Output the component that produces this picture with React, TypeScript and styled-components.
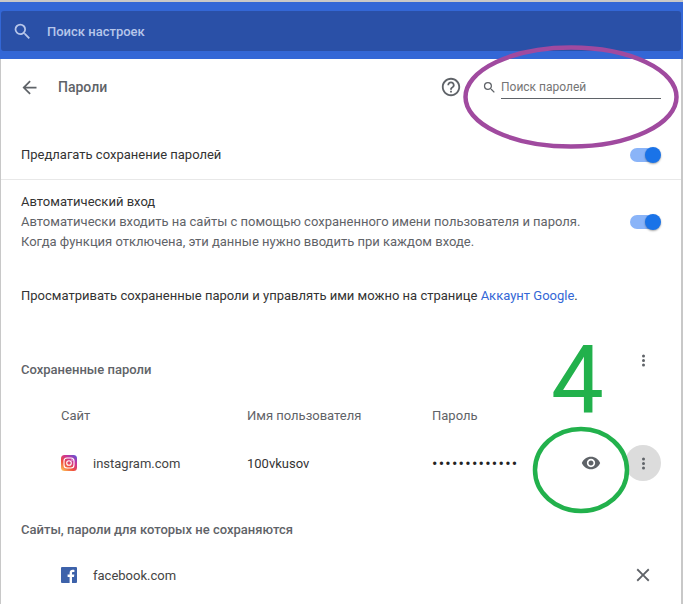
import React from "react";
import styled, { createGlobalStyle } from "styled-components";

const GlobalStyle = createGlobalStyle`
  html, body { margin: 0; padding: 0; background: #fff; }
  body { font-family: Roboto, "Noto Sans", sans-serif; }
`;

const App: React.FC = () => {
  return (
    <>
      <GlobalStyle />
      <Page>
        <TopBar>
          <SearchBox>
            <SearchGlyph size={21} color="#b7c6ea" viewBox="0 0 24 24">
              <path d="M15.5 14h-.79l-.28-.27A6.47 6.47 0 0 0 16 9.5 6.5 6.5 0 1 0 9.5 16c1.61 0 3.09-.59 4.23-1.57l.27.28v.79l5 4.99L20.49 19l-4.99-5zm-6 0C7.01 14 5 11.99 5 9.5S7.01 5 9.5 5 14 7.01 14 9.5 11.99 14 9.5 14z" />
            </SearchGlyph>
            <SearchHint>Поиск настроек</SearchHint>
          </SearchBox>
        </TopBar>

        <Card>
          <TitleRow>
            <BackButton viewBox="0 0 24 24" width="21" height="21">
              <path d="M20 11H7.83l5.59-5.59L12 4l-8 8 8 8 1.41-1.41L7.83 13H20v-2z" />
            </BackButton>
            <Title>Пароли</Title>
            <Spacer />
            <HelpIcon viewBox="0 0 24 24" width="22" height="22">
              <path d="M11 18h2v-2h-2v2zm1-16C6.48 2 2 6.48 2 12s4.48 10 10 10 10-4.48 10-10S17.52 2 12 2zm0 18c-4.41 0-8-3.59-8-8s3.59-8 8-8 8 3.59 8 8-3.59 8-8 8zm0-14c-2.21 0-4 1.79-4 4h2c0-1.1.9-2 2-2s2 .9 2 2c0 2-3 1.75-3 5h2c0-2.25 3-2.5 3-5 0-2.21-1.79-4-4-4z" />
            </HelpIcon>
            <PasswordSearch>
              <SearchGlyph size={15} color="#5f6368" viewBox="0 0 24 24">
                <path d="M15.5 14h-.79l-.28-.27A6.47 6.47 0 0 0 16 9.5 6.5 6.5 0 1 0 9.5 16c1.61 0 3.09-.59 4.23-1.57l.27.28v.79l5 4.99L20.49 19l-4.99-5zm-6 0C7.01 14 5 11.99 5 9.5S7.01 5 9.5 5 14 7.01 14 9.5 11.99 14 9.5 14z" />
              </SearchGlyph>
              <PasswordInput>Поиск паролей</PasswordInput>
            </PasswordSearch>
          </TitleRow>

          <OfferRow>
            <BodyText>Предлагать сохранение паролей</BodyText>
            <Toggle />
          </OfferRow>

          <AutoRow>
            <div>
              <BodyText>Автоматический вход</BodyText>
              <Secondary>Автоматически входить на сайты с помощью сохраненного имени пользователя и пароля.</Secondary>
              <Secondary>Когда функция отключена, эти данные нужно вводить при каждом входе.</Secondary>
            </div>
            <Toggle />
          </AutoRow>

          <AccountLine>
            Просматривать сохраненные пароли и управлять ими можно на странице <AccountLink>Аккаунт Google</AccountLink>.
          </AccountLine>

          <SavedHeader>
            <SectionTitle>Сохраненные пароли</SectionTitle>
            <HeaderMore />
          </SavedHeader>

          <TableHead>
            <SiteCol>Сайт</SiteCol>
            <UserCol>Имя пользователя</UserCol>
            <PassCol>Пароль</PassCol>
          </TableHead>

          <PasswordRow>
            <SiteCell>
              <svg width="16" height="16" viewBox="0 0 16 16">
                <defs>
                  <linearGradient id="ig" x1="0.1" y1="1" x2="0.9" y2="0">
                    <stop offset="0" stopColor="#fdc35c" />
                    <stop offset="0.35" stopColor="#f0503c" />
                    <stop offset="0.7" stopColor="#c9329a" />
                    <stop offset="1" stopColor="#5b55d6" />
                  </linearGradient>
                </defs>
                <rect width="16" height="16" rx="3.5" fill="url(#ig)" />
                <rect x="3" y="3" width="10" height="10" rx="3" fill="none" stroke="#fff" strokeWidth="1.1" />
                <circle cx="8" cy="8" r="2.3" fill="none" stroke="#fff" strokeWidth="1.1" />
                <circle cx="11" cy="5" r="0.7" fill="#fff" />
              </svg>
              <SiteName>instagram.com</SiteName>
            </SiteCell>
            <UserCell>100vkusov</UserCell>
            <Dots>•••••••••••••</Dots>
            <EyeIcon viewBox="0 0 24 24" width="20" height="20">
              <path d="M12 4.5C7 4.5 2.73 7.61 1 12c1.73 4.39 6 7.5 11 7.5s9.27-3.11 11-7.5c-1.73-4.39-6-7.5-11-7.5zM12 17c-2.76 0-5-2.24-5-5s2.24-5 5-5 5 2.24 5 5-2.24 5-5 5zm0-8c-1.66 0-3 1.34-3 3s1.34 3 3 3 3-1.34 3-3-1.34-3-3-3z" />
            </EyeIcon>
            <RoundButton>
              <MoreIcon />
            </RoundButton>
          </PasswordRow>

          <NeverTitle>Сайты, пароли для которых не сохраняются</NeverTitle>

          <NeverRow>
            <svg width="16" height="16" viewBox="0 0 16 16">
              <rect width="16" height="16" rx="1" fill="#3d62aa" />
              <path d="M11 16v-6h2l.3-2.4H11V6.1c0-.7.2-1.1 1.2-1.1h1.2V2.9c-.2 0-.9-.1-1.8-.1-1.8 0-3 1.1-3 3.1v1.7H6.6V10h2v6z" fill="#fff" />
            </svg>
            <SiteName>facebook.com</SiteName>
            <Spacer />
            <CloseIcon viewBox="0 0 24 24" width="22" height="22">
              <path d="M19 6.41 17.59 5 12 10.59 6.41 5 5 6.41 10.59 12 5 17.59 6.41 19 12 13.41 17.59 19 19 17.59 13.41 12z" />
            </CloseIcon>
          </NeverRow>
        </Card>

        <PurpleRing viewBox="0 0 216 104" width="216" height="104">
          <ellipse cx="108" cy="52" rx="105.5" ry="49.5" fill="none" stroke="#a04a9f" strokeWidth="4.5" />
        </PurpleRing>
        <GreenRing viewBox="0 0 98 88" width="98" height="88">
          <ellipse cx="49" cy="44" rx="46" ry="41" fill="none" stroke="#22b14c" strokeWidth="4.5" />
        </GreenRing>
        <BigFour>4</BigFour>
      </Page>
    </>
  );
};

const Page = styled.div`
  position: relative;
  width: 683px;
  height: 604px;
  overflow: hidden;
  box-sizing: border-box;
  border-top: 2px solid #c8c8c8;
  background: #fff;
`;

const TopBar = styled.div`
  background: #3367d6;
  height: 57px;
  padding: 9px 2px 0 1px;
  box-sizing: border-box;
`;

const SearchBox = styled.div`
  height: 40px;
  background: #2a50a7;
  border-radius: 3px;
  display: flex;
  align-items: center;
  padding-left: 11px;
`;

const SearchGlyph = styled.svg.attrs<{ size: number; color: string }>((p) => ({
  width: p.size,
  height: p.size,
  fill: p.color,
}))<{ size: number; color: string }>`
  flex: none;
`;

const SearchHint = styled.span`
  margin-left: 14px;
  font-size: 13px;
  font-weight: 500;
  color: #b7c6ea;
`;

const Card = styled.div`
  border-left: 1px solid #c8c8c8;
  border-right: 2px solid #c8c8c8;
  height: 545px;
  box-sizing: border-box;
`;

const TitleRow = styled.div`
  display: flex;
  align-items: center;
  height: 56px;
  padding: 0 20px 0 18px;
`;

const BackButton = styled.svg`
  fill: #5f6368;
  flex: none;
`;

const Title = styled.div`
  margin-left: 18px;
  font-size: 14px;
  font-weight: 500;
  color: #5f6368;
`;

const Spacer = styled.div`
  flex: 1;
`;

const HelpIcon = styled.svg`
  fill: #5f6368;
  margin-right: 20px;
`;

const PasswordSearch = styled.div`
  display: flex;
  align-items: center;
  gap: 4px;
`;

const PasswordInput = styled.div`
  width: 160px;
  height: 24px;
  line-height: 24px;
  box-sizing: border-box;
  border-bottom: 1px solid #5f6368;
  font-size: 12px;
  color: #757575;
`;

const OfferRow = styled.div`
  display: flex;
  align-items: center;
  justify-content: space-between;
  height: 65px;
  box-sizing: border-box;
  padding: 16px 20px 0;
  border-bottom: 1px solid #e8e8e8;
`;

const BodyText = styled.div`
  font-size: 13px;
  line-height: 20px;
  color: #333;
`;

const Secondary = styled.div`
  font-size: 13px;
  line-height: 20px;
  color: #5f6368;
`;

const Toggle = styled.div`
  position: relative;
  flex: none;
  width: 26px;
  height: 14px;
  margin-right: 5px;
  border-radius: 7px;
  background: #8ab4f8;

  &::after {
    content: "";
    position: absolute;
    right: -5px;
    top: -1px;
    width: 16px;
    height: 16px;
    border-radius: 50%;
    background: #1a73e8;
    box-shadow: 0 1px 2px rgba(0, 0, 0, 0.35);
  }
`;

const AutoRow = styled.div`
  display: flex;
  align-items: center;
  justify-content: space-between;
  padding: 12px 20px 0;
`;

const AccountLine = styled.div`
  margin-top: 34px;
  padding: 0 20px;
  font-size: 13px;
  line-height: 20px;
  color: #333;
`;

const AccountLink = styled.span`
  color: #3367d6;
`;

const SavedHeader = styled.div`
  display: flex;
  align-items: center;
  justify-content: space-between;
  margin-top: 47px;
  padding-left: 20px;
  height: 32px;
`;

const SectionTitle = styled.div`
  font-size: 13px;
  font-weight: 500;
  color: #5f6368;
`;

const MoreIcon = styled.span`
  display: block;
  width: 3px;
  height: 3px;
  border-radius: 50%;
  background: #5f6368;
  box-shadow: 0 4.5px 0 #5f6368, 0 -4.5px 0 #5f6368;
`;

const HeaderMore = styled(MoreIcon)`
  margin: 0 36px 18px 0;
`;

const TableHead = styled.div`
  display: flex;
  align-items: center;
  margin-top: 20px;
  height: 20px;
  font-size: 13px;
  color: #5f6368;
`;

const SiteCol = styled.div`
  width: 186px;
  padding-left: 60px;
`;

const UserCol = styled.div`
  width: 185px;
`;

const PassCol = styled.div``;

const PasswordRow = styled.div`
  display: flex;
  align-items: center;
  margin-top: 16px;
  height: 44px;
`;

const SiteCell = styled.div`
  display: flex;
  align-items: center;
  width: 186px;
  padding-left: 60px;
`;

const SiteName = styled.span`
  margin-left: 16px;
  font-size: 13px;
  color: #444;
`;

const UserCell = styled.div`
  width: 185px;
  font-size: 13px;
  color: #333;
`;

const Dots = styled.div`
  width: 149px;
  font-size: 16px;
  letter-spacing: 1.25px;
  color: #222;
`;

const EyeIcon = styled.svg`
  fill: #5f6368;
`;

const RoundButton = styled.div`
  display: flex;
  align-items: center;
  justify-content: center;
  margin-left: 24px;
  width: 36px;
  height: 36px;
  border-radius: 50%;
  background: #dcdcdc;
`;

const NeverTitle = styled.div`
  margin-top: 35px;
  padding-left: 20px;
  line-height: 20px;
  font-size: 13px;
  font-weight: 500;
  color: #5f6368;
`;

const NeverRow = styled.div`
  display: flex;
  align-items: center;
  margin-top: 13px;
  height: 44px;
  padding: 0 27px 0 60px;
`;

const CloseIcon = styled.svg`
  fill: #5f6368;
`;

const PurpleRing = styled.svg`
  position: absolute;
  left: 463px;
  top: 43px;
`;

const GreenRing = styled.svg`
  position: absolute;
  left: 532px;
  top: 424px;
`;

const BigFour = styled.div`
  position: absolute;
  left: 551px;
  top: 329px;
  font-family: Roboto, sans-serif;
  font-weight: 400;
  font-size: 94px;
  line-height: 100px;
  color: #22b14c;
`;

export default App;
